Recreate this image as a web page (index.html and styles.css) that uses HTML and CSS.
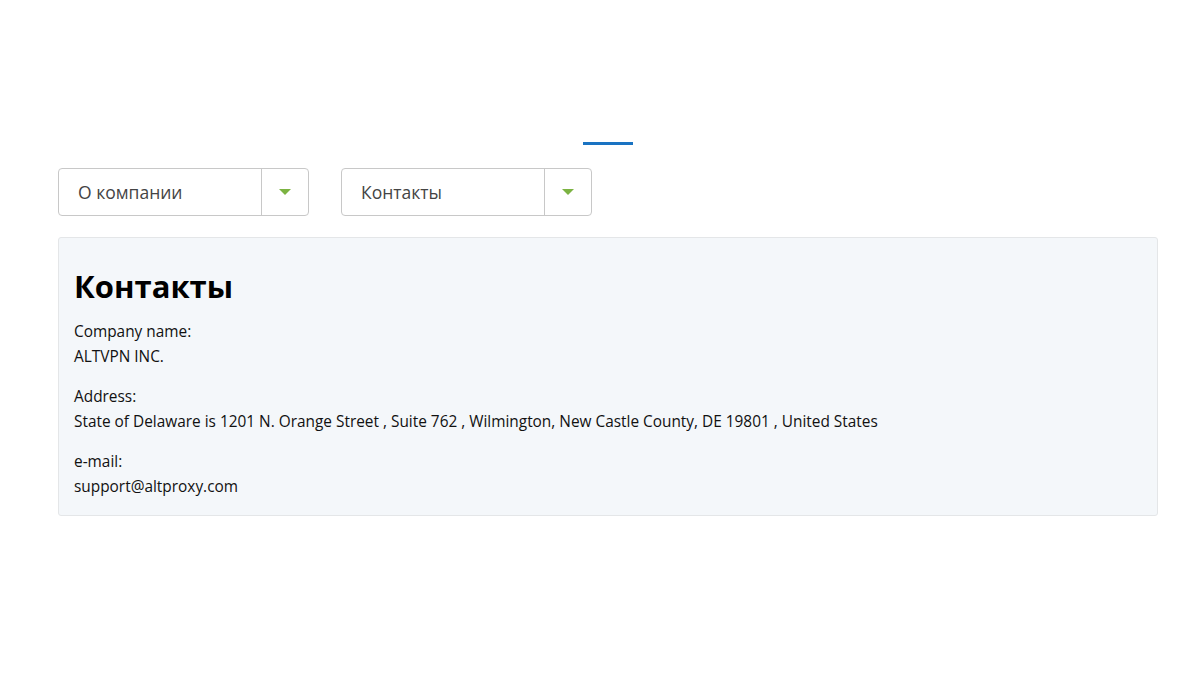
FILE: index.html
```html
<!DOCTYPE html>
<html lang="ru">
<head>
  <meta charset="UTF-8">
  <meta name="viewport" content="width=device-width, initial-scale=1.0">
  <title>Контакты</title>
  <link rel="stylesheet" href="styles.css">
</head>
<body>
  <div class="container">
    <div class="line"></div>
    <div class="selects">
      <div class="select">
        <span class="select-text">О компании</span>
        <span class="select-arrow"></span>
      </div>
      <div class="select">
        <span class="select-text">Контакты</span>
        <span class="select-arrow"></span>
      </div>
    </div>
    <div class="panel">
      <h2>Контакты</h2>
      <p>Company name:<br>ALTVPN INC.</p>
      <p>Address:<br>State of Delaware is 1201 N. Orange Street , Suite 762 , Wilmington, New Castle County, DE 19801 , United States</p>
      <p>e-mail:<br>support@altproxy.com</p>
    </div>
  </div>
</body>
</html>
```

FILE: styles.css
```css
* {
  margin: 0;
  padding: 0;
  box-sizing: border-box;
}
body {
  background-color: #fff;
  font-family: 'Open Sans', 'Noto Sans', sans-serif;
  color: #111;
}
.container {
  width: 1100px;
  margin: 0 0 0 58px;
  padding-top: 142px;
}
.line {
  width: 50px;
  height: 3px;
  background-color: #1a73c2;
  margin: 0 auto 23px;
}
.selects {
  display: flex;
  gap: 32px;
  margin-bottom: 21px;
}
.select {
  display: flex;
  width: 251px;
  height: 48px;
  border: 1px solid #c8c8c8;
  border-radius: 4px;
  background-color: #fff;
}
.select-text {
  flex: 1;
  display: flex;
  align-items: center;
  padding-left: 19px;
  font-size: 17.5px;
  color: #444;
  border-right: 1px solid #c8c8c8;
}
.select-arrow {
  width: 46px;
  display: flex;
  align-items: center;
  justify-content: center;
}
.select-arrow::after {
  content: '';
  border-left: 6px solid transparent;
  border-right: 6px solid transparent;
  border-top: 6px solid #7cb342;
}
.panel {
  background-color: #f4f7fa;
  border: 1px solid #e4e6e8;
  border-radius: 3px;
  padding: 28px 15px 16px;
}
.panel h2 {
  font-size: 31px;
  font-weight: 700;
  line-height: 40px;
  color: #000;
  margin-bottom: 13px;
}
.panel p {
  font-size: 15.4px;
  line-height: 25px;
  margin-bottom: 15px;
}
.panel p:last-child {
  margin-bottom: 0;
}
```
